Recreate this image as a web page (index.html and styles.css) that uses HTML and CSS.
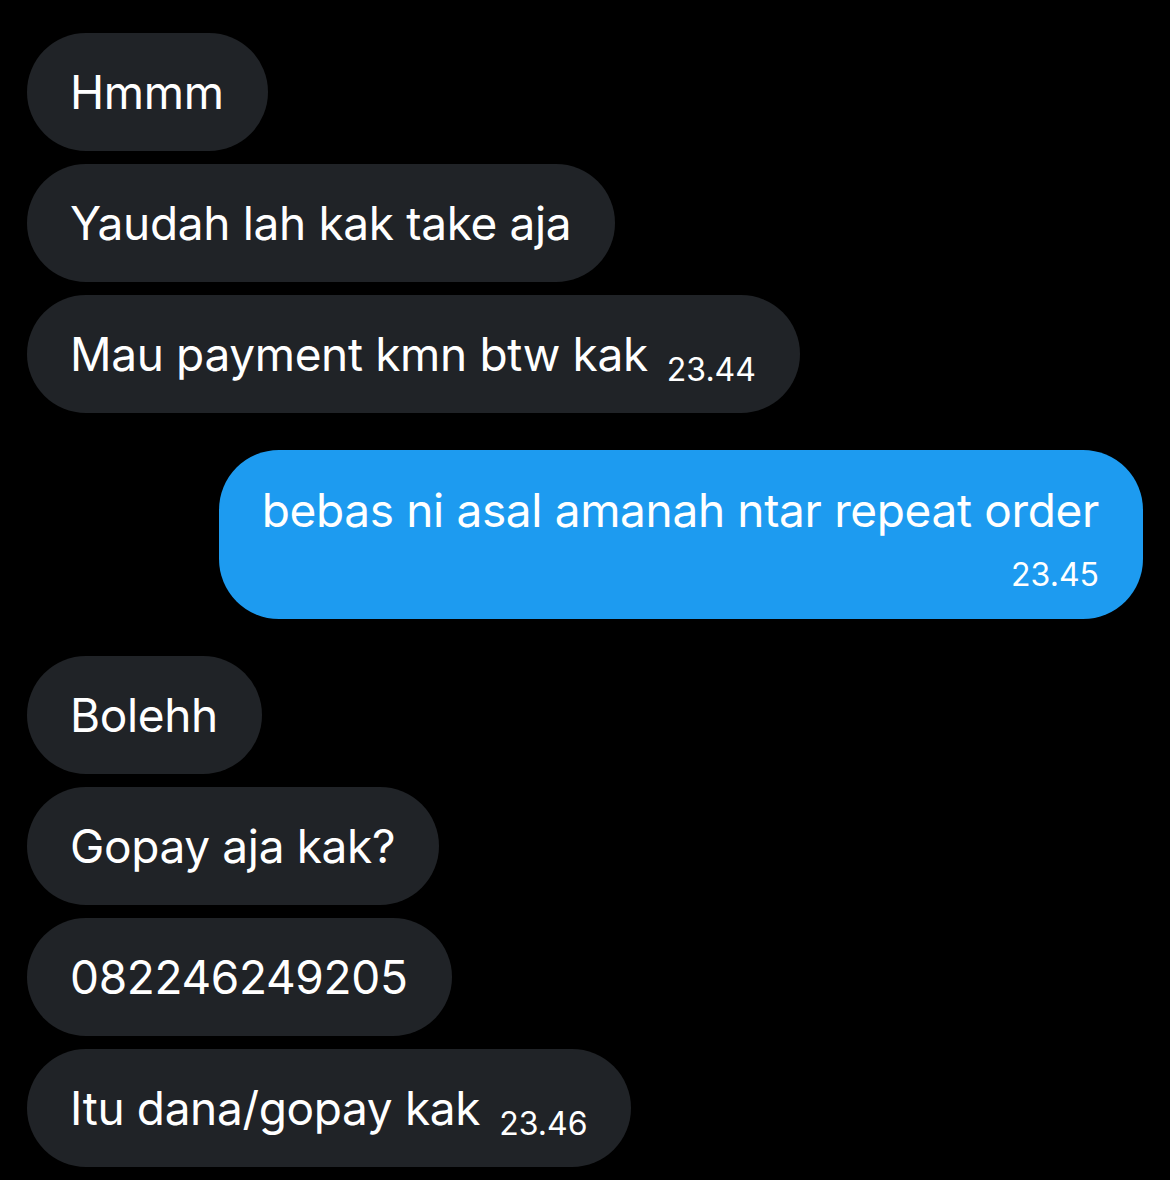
FILE: index.html
```html
<!DOCTYPE html>
<html lang="id">

<head>
  <meta charset="UTF-8">
  <meta name="viewport" content="width=device-width, initial-scale=1.0">
  <title>Pesan</title>
  <link rel="stylesheet" href="styles.css">
</head>

<body>
  <main class="thread">
    <div class="group group-in">
      <div class="bubble">Hmmm</div>
      <div class="bubble">Yaudah lah kak take aja</div>
      <div class="bubble">Mau payment kmn btw kak<span class="time">23.44</span></div>
    </div>

    <div class="group group-out">
      <div class="bubble bubble-out">
        <p class="text">bebas ni asal amanah ntar repeat order</p>
        <span class="time-out">23.45</span>
      </div>
    </div>

    <div class="group group-in">
      <div class="bubble">Bolehh</div>
      <div class="bubble">Gopay aja kak?</div>
      <div class="bubble">082246249205</div>
      <div class="bubble">Itu dana/gopay kak<span class="time">23.46</span></div>
    </div>
  </main>
</body>

</html>
```

FILE: styles.css
```css
body {
  margin: 0;
  background: #000;
  color: #fff;
  font-family: Inter, "Noto Sans", sans-serif;
}

.thread {
  display: flex;
  flex-direction: column;
  gap: 37px;
  padding: 33px 27px 0;
}

.group {
  display: flex;
  flex-direction: column;
  gap: 13px;
}

.group-in {
  align-items: flex-start;
}

.group-out {
  align-items: flex-end;
}

.bubble {
  background: #202327;
  border-radius: 60px;
  padding: 31px 44px 31px 43px;
  font-size: 46px;
  line-height: 56px;
  letter-spacing: -0.35px;
  white-space: nowrap;
}

/* small time stamp sitting after the last message of a group */
.time {
  margin-left: 19px;
  font-size: 32px;
  line-height: 24px;
  letter-spacing: 0;
  vertical-align: -10px;
}

.bubble-out {
  background: #1d9bf0;
  display: flex;
  flex-direction: column;
  align-items: flex-end;
  gap: 17px;
  padding: 32px 44px 24px 43px;
}

.bubble-out .text {
  margin: 0;
}

.time-out {
  font-size: 32px;
  line-height: 40px;
  letter-spacing: 0;
}
```
